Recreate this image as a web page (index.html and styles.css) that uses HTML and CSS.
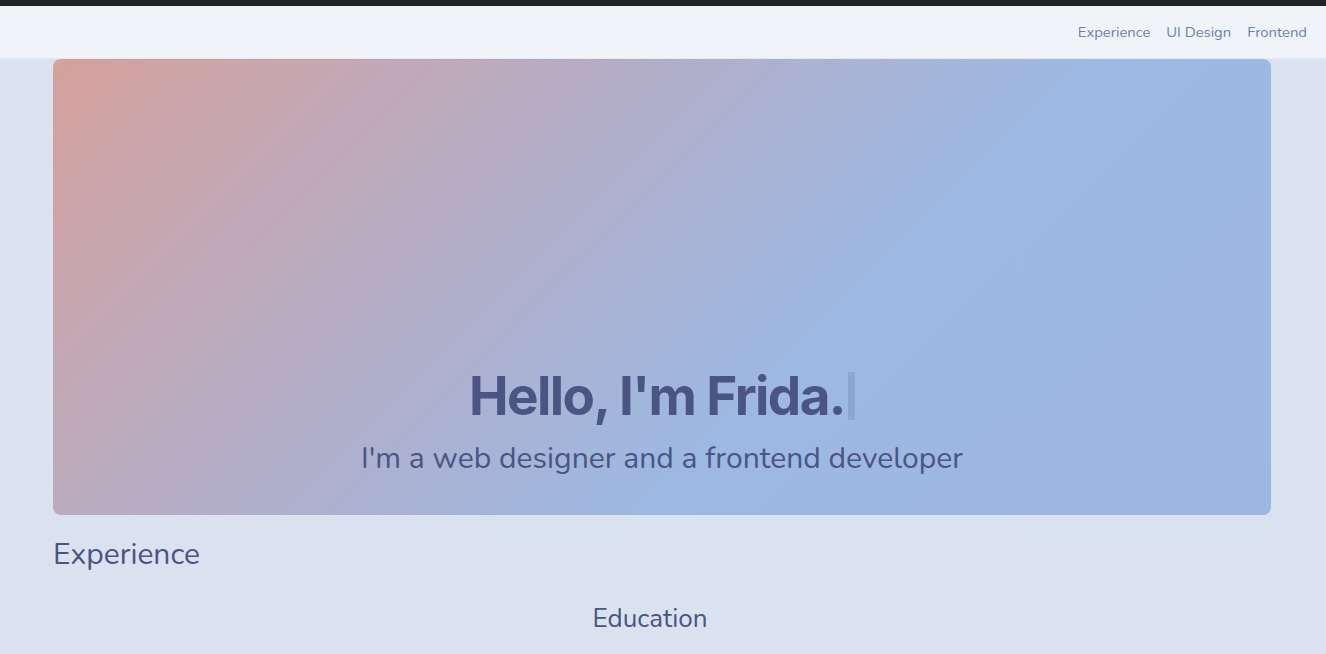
FILE: index.html
```html
<!DOCTYPE html>
<html lang="en">
<head>
<meta charset="utf-8">
<title>Frida</title>
<link rel="stylesheet" href="styles.css">
</head>
<body>
<div class="chrome"></div>
<header class="topbar">
  <nav class="nav">
    <a href="#">Experience</a>
    <a href="#">UI Design</a>
    <a href="#">Frontend</a>
  </nav>
</header>
<main class="main">
  <section class="hero">
    <h1 class="hero-title">Hello, I'm Frida.<span class="cursor"></span></h1>
    <p class="hero-sub">I'm a web designer and a frontend developer</p>
  </section>
  <h2 class="section-title">Experience</h2>
  <h3 class="sub-title">Education</h3>
</main>
</body>
</html>
```
FILE: styles.css
```css
html, body {
  margin: 0;
  padding: 0;
}
body {
  background: #dbe2ef;
  font-family: "Nunito", "Lato", "Noto Sans", sans-serif;
  color: #4a5584;
  overflow: hidden;
}
.chrome {
  height: 6px;
  background: #232325;
}
.topbar {
  height: 52px;
  background: #f0f3f8;
  border-bottom: 1px solid #e4e8f0;
  display: flex;
  justify-content: flex-end;
  align-items: center;
  padding-right: 19px;
}
.nav {
  display: flex;
  gap: 16px;
}
.nav a {
  color: #6f7fb2;
  text-decoration: none;
  font-size: 14.8px;
  font-family: "Nunito", "Lato", sans-serif;
}
.main {
  padding: 0 55px 0 53px;
}
.hero {
  height: 456px;
  border-radius: 8px;
  background: linear-gradient(135deg, #d5a19c 0%, #b4aec8 35%, #9db8e2 62%, #9db7e2 100%);
  display: flex;
  flex-direction: column;
  justify-content: flex-end;
  align-items: center;
  padding-bottom: 38px;
  box-sizing: border-box;
}
.hero-title {
  margin: 0 0 9px;
  font-family: "Inter", sans-serif;
  font-weight: 700;
  font-size: 53px;
  letter-spacing: -1.6px;
  line-height: 60px;
  color: #4a5584;
  display: flex;
  align-items: center;
}
.cursor {
  display: inline-block;
  width: 7px;
  height: 48px;
  margin-left: 3px;
  background: rgba(130, 160, 210, 0.7);
}
.hero-sub {
  margin: 6px 0 0;
  font-size: 30.1px;
  line-height: 36px;
  color: #4a5584;
}
.section-title {
  margin: 22px 0 0;
  font-weight: 400;
  font-size: 30px;
  line-height: 36px;
}
.sub-title {
  margin: 30px 0 0;
  padding-right: 24px;
  text-align: center;
  font-weight: 400;
  font-size: 26px;
  line-height: 32px;
}
```
